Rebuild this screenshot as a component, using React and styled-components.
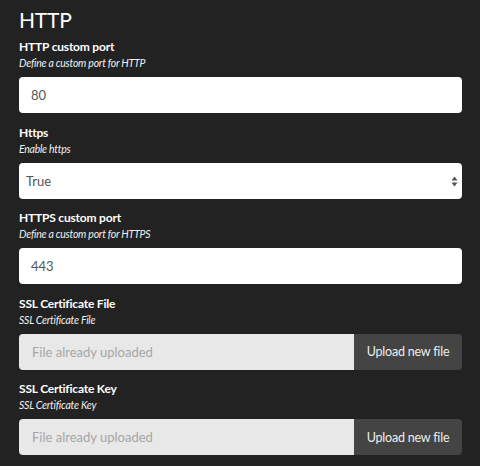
import React from 'react';
import styled, { createGlobalStyle } from 'styled-components';

const GlobalStyle = createGlobalStyle`
html, body {
  margin: 0;
  padding: 0;
  background-color: #222222;
}
body {
  font-family: Lato, "Open Sans", sans-serif;
}`

const Page = styled.section`
padding: 7px 18px 0 19px;
color: #ffffff;`

const Title = styled.h2`
font-size: 21px;
font-weight: 400;
line-height: 26px;
letter-spacing: -0.2px;
margin: 0 0 6px 0;`

const Group = styled.div`
margin-bottom: 11.5px;`

const Label = styled.label`
display: block;
font-size: 12px;
font-weight: 700;
line-height: 16px;
letter-spacing: -0.2px;`

const Help = styled.div`
font-size: 10.5px;
font-style: italic;
line-height: 17px;
letter-spacing: -0.25px;
color: #f0f0f0;
margin-bottom: 5px;`

const TextInput = styled.input`
box-sizing: border-box;
display: block;
width: 100%;
height: 36px;
padding: 0 12px;
border: none;
border-radius: 4px;
background: #ffffff;
color: #555555;
font-family: Lato, sans-serif;
font-size: 13px;
outline: none;`

const SelectWrap = styled.div`
position: relative;`

const Select = styled.select`
box-sizing: border-box;
appearance: none;
display: block;
width: 100%;
height: 36px;
padding: 0 7px;
border: none;
border-radius: 4px;
background: #ffffff;
color: #555555;
font-family: Lato, sans-serif;
font-size: 13px;
outline: none;`

const Arrows = styled.svg`
position: absolute;
right: 4px;
top: 13px;
pointer-events: none;`

const FileRow = styled.div`
display: flex;
height: 36px;
border-radius: 4px;
overflow: hidden;`

const FileField = styled.div`
flex: 1;
display: flex;
align-items: center;
padding: 0 13px;
background: #e8e8e8;
color: #a6a6a6;
font-size: 13px;`

const UploadButton = styled.button`
width: 108px;
border: none;
background: #444444;
color: #eeeeee;
font-family: Lato, sans-serif;
font-size: 12.5px;
letter-spacing: -0.2px;
padding: 0;
cursor: pointer;`

const Field = ({ label, help, children }) => (
  <Group>
    <Label>{label}</Label>
    <Help>{help}</Help>
    {children}
  </Group>
);

const FileUpload = () => (
  <FileRow>
    <FileField>File already uploaded</FileField>
    <UploadButton>Upload new file</UploadButton>
  </FileRow>
);

const App = () => {
  return (
    <Page>
      <GlobalStyle />
      <Title>HTTP</Title>
      <Field label="HTTP custom port" help="Define a custom port for HTTP">
        <TextInput defaultValue="80" />
      </Field>
      <Field label="Https" help="Enable https">
        <SelectWrap>
          <Select defaultValue="true">
            <option value="true">True</option>
            <option value="false">False</option>
          </Select>
          <Arrows width="7" height="11" viewBox="0 0 7 11">
            <path d="M3.5 0.5 L6.5 4.5 L0.5 4.5 Z" fill="#555" />
            <path d="M3.5 10.5 L6.5 6.5 L0.5 6.5 Z" fill="#555" />
          </Arrows>
        </SelectWrap>
      </Field>
      <Field label="HTTPS custom port" help="Define a custom port for HTTPS">
        <TextInput defaultValue="443" />
      </Field>
      <Field label="SSL Certificate File" help="SSL Certificate File">
        <FileUpload />
      </Field>
      <Field label="SSL Certificate Key" help="SSL Certificate Key">
        <FileUpload />
      </Field>
    </Page>
  );
};

export default App;
